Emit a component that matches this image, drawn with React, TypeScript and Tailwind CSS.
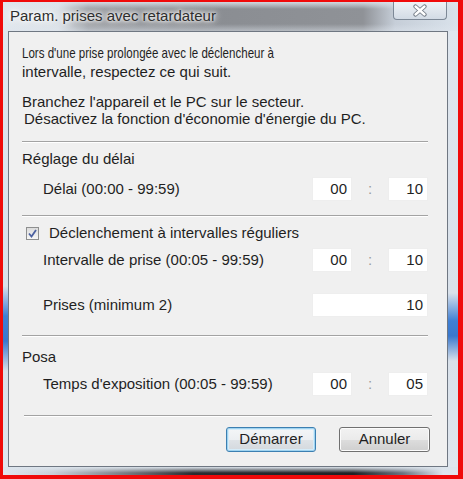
import React from "react";

function Sep({ extra = "" }: { extra?: string }) {
  return (
    <div className={"flex flex-col " + extra}>
      <div className="h-[1px] bg-[#a3a3a3]" />
      <div className="h-[1px] bg-white" />
    </div>
  );
}

function Box({ children, w }: { children: React.ReactNode; w: string }) {
  return (
    <div
      className={
        "flex h-[24px] items-center justify-end border border-[#eeeeee] bg-white pr-[4px] " + w
      }
    >
      {children}
    </div>
  );
}

function TimeRow({ label, a, b, mt }: { label: string; a: string; b: string; mt: string }) {
  return (
    <div className={"flex h-[24px] items-center pl-[21px] " + mt}>
      <span className="flex-1">{label}</span>
      <Box w="w-[40px]">{a}</Box>
      <span className="w-[36px] text-center text-[#9c9c9c]">:</span>
      <Box w="w-[40px]">{b}</Box>
    </div>
  );
}

export default function App() {
  return (
    <div className="h-[479px] w-[463px] bg-[#f00a0a] pl-[3px] pt-[2px] pr-[5px] pb-[4px] font-['Liberation_Sans',Arial,sans-serif] text-[15px] text-[#1f1f1f]">
      <div className="flex h-full w-full flex-col bg-[#dbe3ec]">
        {/* title bar */}
        <div className="flex h-[29px] items-start bg-[linear-gradient(180deg,rgba(222,229,237,0.85)_0px,rgba(222,229,237,0)_7px,rgba(222,229,237,0)_22px,rgba(222,229,237,0.5)_29px),linear-gradient(90deg,#e2e8ee_0px,#dce2e8_55px,#9b9ea3_85px,#8a8d92_200px,#8f9297_360px,#c6ced8_392px,#d9e2eb_455px)]">
          <span className="ml-[7px] mt-[5px] flex-1 leading-[18px] text-[#2e2e2e] [text-shadow:0_0_6px_#ffffff,0_0_10px_#ffffff,0_0_3px_#ffffff]">
            Param. prises avec retardateur
          </span>
          <div className="mr-[11px] flex h-[18px] w-[54px] items-center justify-center rounded-b-[4px] border border-t-0 border-[#7d8896] bg-[linear-gradient(180deg,#eef2f6,#d3dbe5)]">
            <svg width="16" height="13" viewBox="0 0 16 13">
              <path d="M3.5 2.5 L12.5 10.5 M12.5 2.5 L3.5 10.5" stroke="#6f7782" strokeWidth="4.2" strokeLinecap="round" />
              <path d="M3.5 2.5 L12.5 10.5 M12.5 2.5 L3.5 10.5" stroke="#ffffff" strokeWidth="2.4" strokeLinecap="round" />
            </svg>
          </div>
        </div>

        {/* middle */}
        <div className="flex flex-1">
          <div className="w-[5px] bg-[linear-gradient(180deg,#dfe6ee_0px,#d9e1ea_255px,#3f7fd4_285px,#3a78cc_310px,#d9e1ea_340px,#dfe6ee_100%)]" />
          <div className="flex w-[440px] flex-col border border-[#6f7782] bg-[#f0f0f0] pl-[13px] pr-[19px] pt-[12px]">
            <div className="flex h-[19px] items-center">
              <span className="inline-block origin-left scale-x-[0.77] whitespace-nowrap">
                Lors d'une prise prolongée avec le déclencheur à
              </span>
            </div>
            <div className="flex h-[19px] items-center">intervalle, respectez ce qui suit.</div>
            <div className="mt-[12px] flex h-[17px] items-center">Branchez l'appareil et le PC sur le secteur.</div>
            <div className="flex h-[17px] items-center pl-[2px]">Désactivez la fonction d'économie d'énergie du PC.</div>

            <Sep extra="mt-[13px]" />
            <div className="mt-[7px] flex h-[18px] items-center">Réglage du délai</div>
            <TimeRow label="Délai (00:00 - 99:59)" a="00" b="10" mt="mt-[9px]" />

            <Sep extra="mt-[14px]" />
            <div className="mt-[7px] flex h-[18px] items-center">
              <div className="ml-[4px] flex h-[13px] w-[13px] items-center justify-center border border-[#8e8f8f] bg-[linear-gradient(180deg,#dcdcdc,#f7f7f7)]">
                <svg width="9" height="9" viewBox="0 0 9 9">
                  <path d="M1 4.5 L3.5 7.5 L8 1" stroke="#4c61a0" strokeWidth="1.8" fill="none" />
                </svg>
              </div>
              <span className="ml-[10px]">Déclenchement à intervalles réguliers</span>
            </div>
            <TimeRow label="Intervalle de prise (00:05 - 99:59)" a="00" b="10" mt="mt-[6px]" />
            <div className="mt-[21px] flex h-[24px] items-center pl-[21px]">
              <span className="flex-1">Prises (minimum 2)</span>
              <Box w="w-[116px]">10</Box>
            </div>

            <Sep extra="mt-[18px]" />
            <div className="mt-[11px] flex h-[18px] items-center">Posa</div>
            <TimeRow label="Temps d'exposition (00:05 - 99:59)" a="00" b="05" mt="mt-[6px]" />

            <Sep extra="mt-[19px] ml-[2px] -mr-[4px]" />
            <div className="mr-[-2px] mt-[10px] flex justify-end gap-[23px]">
              <button className="flex h-[25px] w-[90px] items-center justify-center rounded-[3px] border border-[#3c7fb1] bg-[linear-gradient(180deg,#f4f6f8_0%,#eceff2_50%,#dfe3e7_51%,#d3d8dd_100%)] shadow-[inset_0_0_0_1px_#9fd3f0,inset_0_0_0_2px_#d5ecf9] text-[15px] text-[#1f1f1f]">
                Démarrer
              </button>
              <button className="flex h-[25px] w-[91px] items-center justify-center rounded-[3px] border border-[#707070] bg-[linear-gradient(180deg,#f2f2f2_0%,#ebebeb_50%,#dddddd_51%,#cfcfcf_100%)] shadow-[inset_0_0_0_1px_#fcfcfc] text-[15px] text-[#1f1f1f]">
                Annuler
              </button>
            </div>
          </div>
          <div className="w-[10px] bg-[linear-gradient(180deg,#dfe6ee_0px,#d9e1ea_262px,#3f7fd4_290px,#3a78cc_305px,#d9e1ea_330px,#dfe6ee_100%)]" />
        </div>

        {/* bottom frame */}
        <div className="h-[8px] bg-[linear-gradient(180deg,rgba(220,228,236,1)_0px,rgba(220,228,236,0)_6px),linear-gradient(90deg,#dfe6ee_0px,#c9d0d8_50px,#2a2c30_190px,#1f2124_350px,#6b7480_400px,#dfe6ee_440px)]" />
      </div>
    </div>
  );
}
